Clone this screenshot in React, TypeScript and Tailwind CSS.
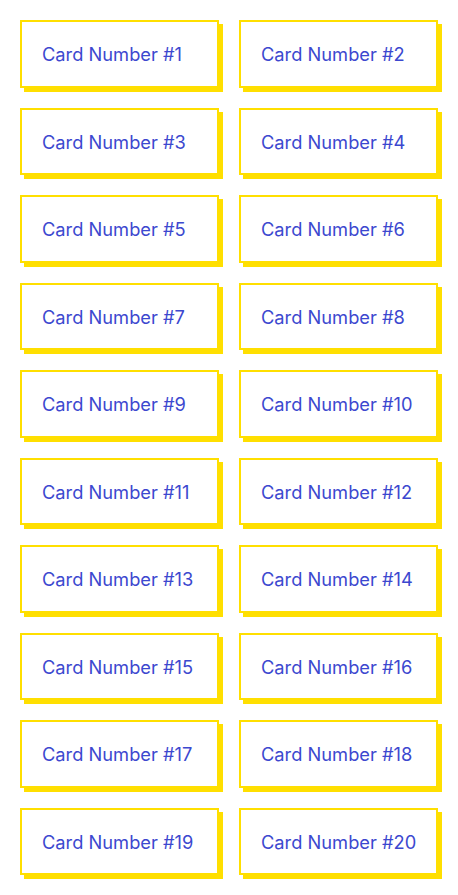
import React from 'react';

const cards = Array.from({ length: 20 }, (_, i) => i + 1);

const Card: React.FC<{ n: number }> = ({ n }) => (
  <div className="flex h-[67.5px] items-center border-2 border-[#ffdf00] bg-white px-5 pt-[2px] shadow-[4px_4px_0_0_#ffdf00]">
    <span className="whitespace-nowrap text-[18.3px] text-[#3c48cf]">Card Number #{n}</span>
  </div>
);

export default function App() {
  return (
    <div className="min-h-screen bg-white font-['Inter',sans-serif]">
      <div className="grid w-full grid-cols-2 gap-x-5 gap-y-5 px-5 pt-5">
        {cards.map((n) => (
          <Card key={n} n={n} />
        ))}
      </div>
    </div>
  );
}
